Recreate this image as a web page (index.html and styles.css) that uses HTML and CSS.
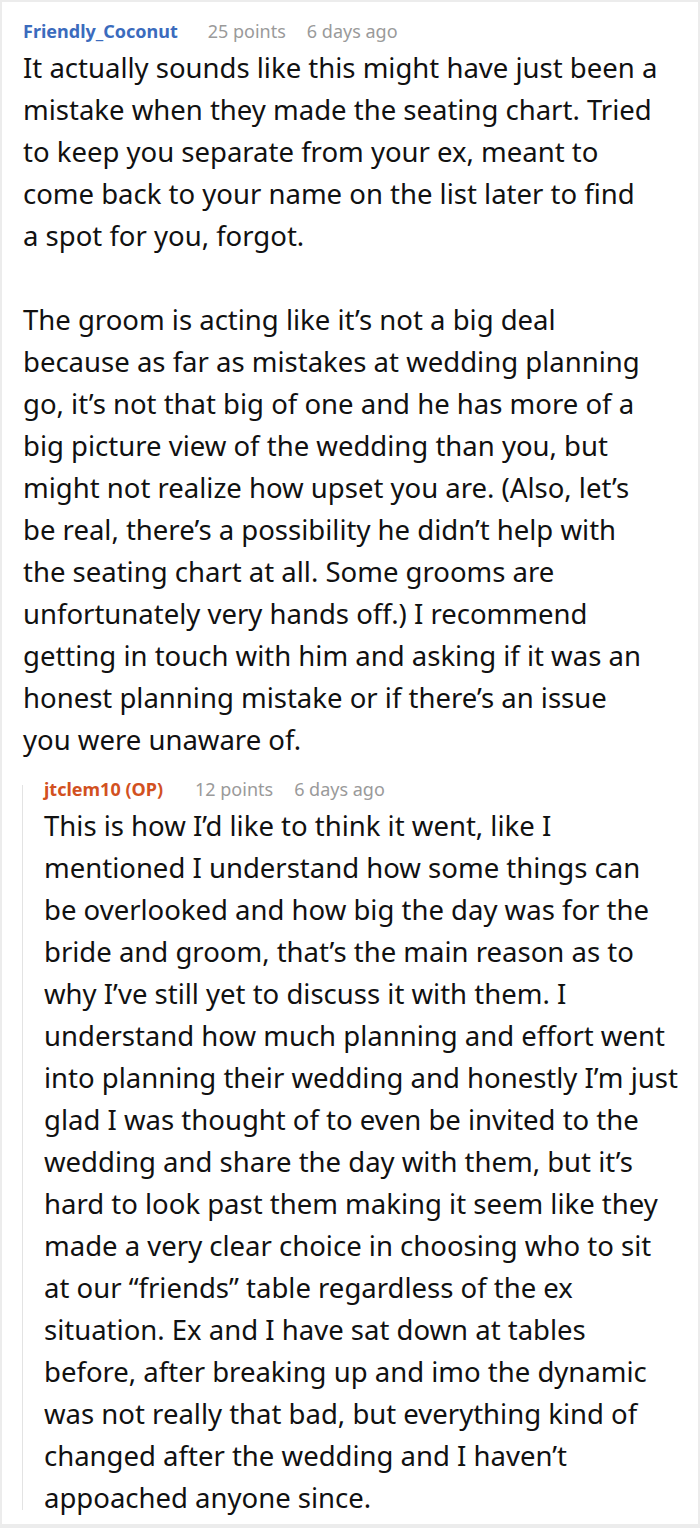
FILE: index.html
```html
<!DOCTYPE html>
<html>
<head>
<meta charset="utf-8">
<link rel="stylesheet" href="styles.css">
</head>
<body>
<div class="frame">
  <div class="comment">
    <div class="meta">
      <span class="author">Friendly_Coconut</span>
      <span class="points">25 points</span>
      <span class="time">6 days ago</span>
    </div>
    <div class="body">
      <p>It actually sounds like this might have just been a<br>mistake when they made the seating chart. Tried<br>to keep you separate from your ex, meant to<br>come back to your name on the list later to find<br>a spot for you, forgot.</p>
      <p>The groom is acting like it’s not a big deal<br>because as far as mistakes at wedding planning<br>go, it’s not that big of one and he has more of a<br>big picture view of the wedding than you, but<br>might not realize how upset you are. (Also, let’s<br>be real, there’s a possibility he didn’t help with<br>the seating chart at all. Some grooms are<br>unfortunately very hands off.) I recommend<br>getting in touch with him and asking if it was an<br>honest planning mistake or if there’s an issue<br>you were unaware of.</p>
    </div>
    <div class="reply">
      <div class="meta">
        <span class="author op">jtclem10 (OP)</span>
        <span class="points">12 points</span>
        <span class="time">6 days ago</span>
      </div>
      <div class="body">
        <p>This is how I’d like to think it went, like I<br>mentioned I understand how some things can<br>be overlooked and how big the day was for the<br>bride and groom, that’s the main reason as to<br>why I’ve still yet to discuss it with them. I<br>understand how much planning and effort went<br>into planning their wedding and honestly I’m just<br>glad I was thought of to even be invited to the<br>wedding and share the day with them, but it’s<br>hard to look past them making it seem like they<br>made a very clear choice in choosing who to sit<br>at our “friends” table regardless of the ex<br>situation. Ex and I have sat down at tables<br>before, after breaking up and imo the dynamic<br>was not really that bad, but everything kind of<br>changed after the wedding and I haven’t<br>appoached anyone since.</p>
      </div>
    </div>
  </div>
</div>
</body>
</html>
```
FILE: styles.css
```css
html, body {
  margin: 0;
  padding: 0;
  background: #fff;
}
.frame {
  width: 700px;
  height: 1528px;
  box-sizing: border-box;
  border: 2px solid #ececec;
  border-bottom-width: 4px;
  font-family: "Noto Sans", sans-serif;
  color: #111;
  overflow: hidden;
}
.comment {
  padding: 17px 0 0 21px;
}
.meta {
  font-size: 18px;
  line-height: 24px;
  display: flex;
  color: #9a9a9a;
  margin-bottom: 4px;
}
.author {
  font-weight: bold;
  color: #3b6bbd;
  margin-right: 30px;
}
.author.op {
  color: #d2511f;
  margin-right: 32px;
}
.points {
  margin-right: 21px;
}
.body {
  font-size: 27.5px;
  line-height: 42px;
  white-space: nowrap;
}
.body p {
  margin: 0 0 42px 0;
}
.body p:last-child {
  margin-bottom: 0;
}
.reply {
  display: flow-root;
  margin: 24px 0 0 -1px;
  border-left: 1px solid #e3e3e3;
  padding-left: 21px;
}
.reply .meta {
  margin-top: -8px;
}
.reply .body {
  margin-bottom: -9px;
}
```
